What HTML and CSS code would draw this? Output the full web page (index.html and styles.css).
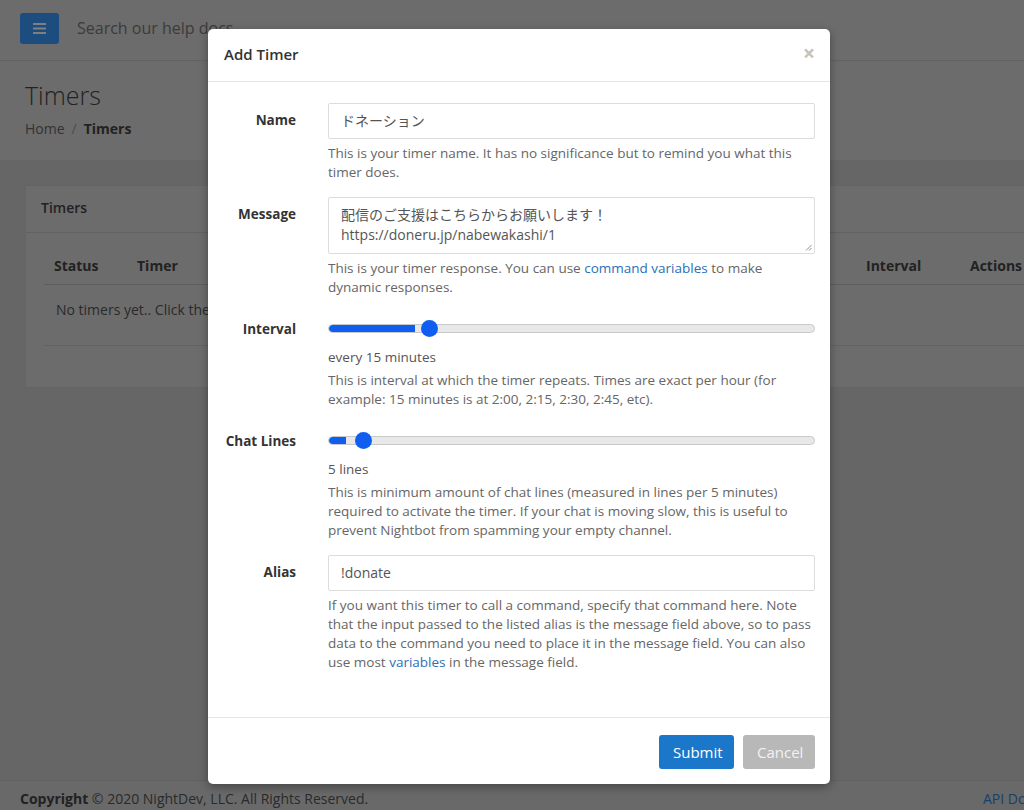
FILE: index.html
```html
<!DOCTYPE html>
<html lang="en">
<head>
<meta charset="utf-8">
<title>Timers</title>
<link rel="stylesheet" href="styles.css">
</head>
<body>
<div class="page">
  <header class="topbar">
    <button class="menu-btn" aria-label="Menu">
      <svg width="13" height="11" viewBox="0 0 13 11"><rect x="0" y="0" width="13" height="2" fill="#fff"/><rect x="0" y="4.5" width="13" height="2" fill="#fff"/><rect x="0" y="9" width="13" height="2" fill="#fff"/></svg>
    </button>
    <div class="search">Search our help docs</div>
  </header>
  <section class="page-head">
    <h1 class="page-title">Timers</h1>
    <div class="crumbs"><span class="crumb">Home</span><span class="sep">/</span><span class="crumb-active">Timers</span></div>
  </section>
  <main class="content">
    <div class="card">
      <div class="card-head">Timers</div>
      <div class="card-body">
        <div class="table">
          <div class="thead">
            <span class="th th-status">Status</span>
            <span class="th th-timer">Timer</span>
            <span class="th th-interval">Interval</span>
            <span class="th th-actions">Actions</span>
          </div>
          <div class="trow">No timers yet.. Click the "Add" button to add one.</div>
        </div>
      </div>
    </div>
  </main>
  <footer class="footer">
    <span><b>Copyright</b> © 2020 NightDev, LLC. All Rights Reserved.</span>
    <span class="footer-link">API Docs</span>
  </footer>
</div>

<div class="overlay"></div>

<div class="modal">
  <div class="modal-head">
    <span class="modal-title">Add Timer</span>
    <span class="close">×</span>
  </div>
  <div class="modal-body">
    <div class="group">
      <label class="label">Name</label>
      <div class="field">
        <div class="input">ドネーション</div>
        <p class="help">This is your timer name. It has no significance but to remind you what this timer does.</p>
      </div>
    </div>
    <div class="group">
      <label class="label">Message</label>
      <div class="field">
        <div class="input textarea">配信のご支援はこちらからお願いします！<br>https://doneru.jp/nabewakashi/1
          <svg class="grip" width="7" height="7" viewBox="0 0 7 7"><path d="M6.5 1 L1 6.5 M6.5 4 L4 6.5" stroke="#888" stroke-width="0.9"/></svg>
        </div>
        <p class="help">This is your timer response. You can use <span class="link">command variables</span> to make dynamic responses.</p>
      </div>
    </div>
    <div class="group">
      <label class="label label-mid">Interval</label>
      <div class="field">
        <div class="slider">
          <div class="track">
            <div class="fill" style="width:86px"></div>
          </div>
          <div class="thumb" style="left:93px"></div>
        </div>
        <div class="value">every 15 minutes</div>
        <p class="help">This is interval at which the timer repeats. Times are exact per hour (for example: 15 minutes is at 2:00, 2:15, 2:30, 2:45, etc).</p>
      </div>
    </div>
    <div class="group">
      <label class="label label-mid">Chat Lines</label>
      <div class="field">
        <div class="slider">
          <div class="track">
            <div class="fill" style="width:17px"></div>
          </div>
          <div class="thumb" style="left:27px"></div>
        </div>
        <div class="value">5 lines</div>
        <p class="help">This is minimum amount of chat lines (measured in lines per 5 minutes) required to activate the timer. If your chat is moving slow, this is useful to prevent Nightbot from spamming your empty channel.</p>
      </div>
    </div>
    <div class="group">
      <label class="label">Alias</label>
      <div class="field">
        <div class="input">!donate</div>
        <p class="help">If you want this timer to call a command, specify that command here. Note that the input passed to the listed alias is the message field above, so to pass data to the command you need to place it in the message field. You can also use most <span class="link">variables</span> in the message field.</p>
      </div>
    </div>
  </div>
  <div class="modal-foot">
    <button class="btn btn-primary">Submit</button>
    <button class="btn btn-cancel">Cancel</button>
  </div>
</div>
</body>
</html>
```

FILE: styles.css
```css
* { box-sizing: border-box; }
html, body { margin: 0; padding: 0; overflow: hidden; }
body {
  font-family: "Open Sans", "Noto Sans CJK JP", sans-serif;
  font-size: 14px;
  color: #333;
  width: 1024px;
  height: 810px;
  position: relative;
}
.page {
  width: 1100px;
  height: 810px;
  display: flex;
  flex-direction: column;
  background: #cccccc;
}
.topbar {
  height: 61px;
  background: #d9d9d9;
  border-bottom: 1px solid #c4c4c4;
  display: flex;
  align-items: center;
  padding: 0 20px;
  gap: 18px;
}
.menu-btn {
  width: 39px;
  height: 31px;
  border: none;
  border-radius: 3px;
  background: #3a98ff;
  display: flex;
  align-items: center;
  justify-content: center;
  padding: 0;
  margin-top: -4px;
}
.search {
  font-size: 16px;
  color: #777;
  margin-top: -4px;
}
.page-head {
  height: 99px;
  background: #d9d9d9;
  padding: 15px 25px 0;
}
.page-title {
  margin: 0;
  font-size: 25px;
  font-weight: 300;
  color: #444;
  line-height: 38px;
}
.crumbs {
  margin-top: 5px;
  font-size: 14px;
  color: #666;
  display: flex;
  gap: 7px;
}
.sep { color: #999; }
.crumb-active { font-weight: 700; color: #444; }
.content {
  flex: 1;
  padding: 25px 0 0 25px;
}
.card {
  background: #d9d9d9;
  border: 1px solid #c8c8c8;
  height: 203px;
}
.card-head {
  height: 47px;
  padding: 12px 15px 0;
  font-size: 14px;
  font-weight: 600;
  color: #444;
  border-bottom: 1px solid #c4c4c4;
}
.card-body {
  padding: 19px 0 0 18px;
}
.thead {
  position: relative;
  height: 33px;
  border-bottom: 1px solid #bdbdbd;
  font-weight: 700;
  color: #444;
}
.th { position: absolute; top: 4px; }
.th-status { left: 10px; }
.th-timer { left: 93px; }
.th-interval { left: 822px; }
.th-actions { left: 926px; }
.trow {
  height: 61px;
  padding: 15px 12px 0;
  color: #555;
  border-bottom: 1px solid #c4c4c4;
}
.footer {
  height: 30px;
  border-top: 1px solid #c0c0c0;
  background: #d2d2d2;
  display: flex;
  justify-content: space-between;
  align-items: center;
  padding: 6px 0 0 20px;
  color: #555;
  width: 1024px;
}
.footer b { color: #444; }
.footer-link { color: #2f7fd6; white-space: nowrap; width: 41px; overflow: hidden; }

.overlay {
  position: absolute;
  inset: 0;
  background: rgba(0, 0, 0, 0.5);
}
.modal {
  position: absolute;
  left: 208px;
  top: 29px;
  width: 622px;
  height: 755px;
  background: #fff;
  border-radius: 5px;
  box-shadow: 0 3px 10px rgba(0, 0, 0, 0.35);
  display: flex;
  flex-direction: column;
}
.modal-head {
  height: 53px;
  border-bottom: 1px solid #e5e5e5;
  display: flex;
  align-items: center;
  justify-content: space-between;
  padding: 0 15px 2px 16px;
}
.modal-title {
  font-size: 15px;
  font-weight: 600;
  color: #333;
}
.close {
  font-size: 21px;
  font-weight: 700;
  color: #c2c2c2;
  line-height: 1;
  margin-top: -2px;
}
.modal-body {
  flex: 1;
  padding: 21px 15px 0 16px;
}
.group {
  display: grid;
  grid-template-columns: 72px 1fr;
  column-gap: 32px;
  margin-bottom: 15px;
}
.label {
  text-align: right;
  font-weight: 700;
  color: #333;
  padding-top: 7px;
  line-height: 20px;
  white-space: nowrap;
  font-size: 13.5px;
}
.field { min-width: 0; }
.input {
  height: 36px;
  border: 1px solid #dcdcdc;
  border-radius: 2px;
  padding: 6px 12px;
  line-height: 22px;
  color: #555;
  font-size: 14px;
}
.textarea {
  height: 57px;
  line-height: 20px;
  padding: 7px 12px;
  position: relative;
}
.grip {
  position: absolute;
  right: 2px;
  bottom: 2px;
}
.help {
  margin: 5px 0 0;
  color: #666;
  line-height: 19px;
  font-size: 13.5px;
}
.link { color: #2a6fb8; }
.slider {
  position: relative;
  height: 33px;
}
.track {
  position: absolute;
  left: 0;
  right: 0;
  top: 12px;
  height: 9px;
  border-radius: 5px;
  background: #e8e8e8;
  border: 1px solid #c9c9c9;
  overflow: hidden;
}
.fill {
  height: 100%;
  background: #0f5ef0;
  border-radius: 5px 0 0 5px;
}
.thumb {
  position: absolute;
  top: 8px;
  width: 17px;
  height: 17px;
  border-radius: 50%;
  background: #0f5ef0;
}
.value {
  margin-top: 2px;
  line-height: 20px;
  color: #555;
  font-size: 13.5px;
}
.slider + .value + .help { margin-top: 4px; }
.modal-foot {
  height: 67px;
  border-top: 1px solid #e5e5e5;
  display: flex;
  justify-content: flex-end;
  align-items: flex-start;
  padding: 17px 15px 0;
  gap: 9px;
}
.btn {
  height: 34px;
  border: none;
  border-radius: 3px;
  font-family: "Open Sans", sans-serif;
  font-size: 15px;
  color: #fff;
  padding: 0 14px;
}
.btn-primary { background: #1a77c9; width: 75px; }
.btn-cancel { background: #b8b8b8; color: #f2f2f2; width: 72px; }
```
